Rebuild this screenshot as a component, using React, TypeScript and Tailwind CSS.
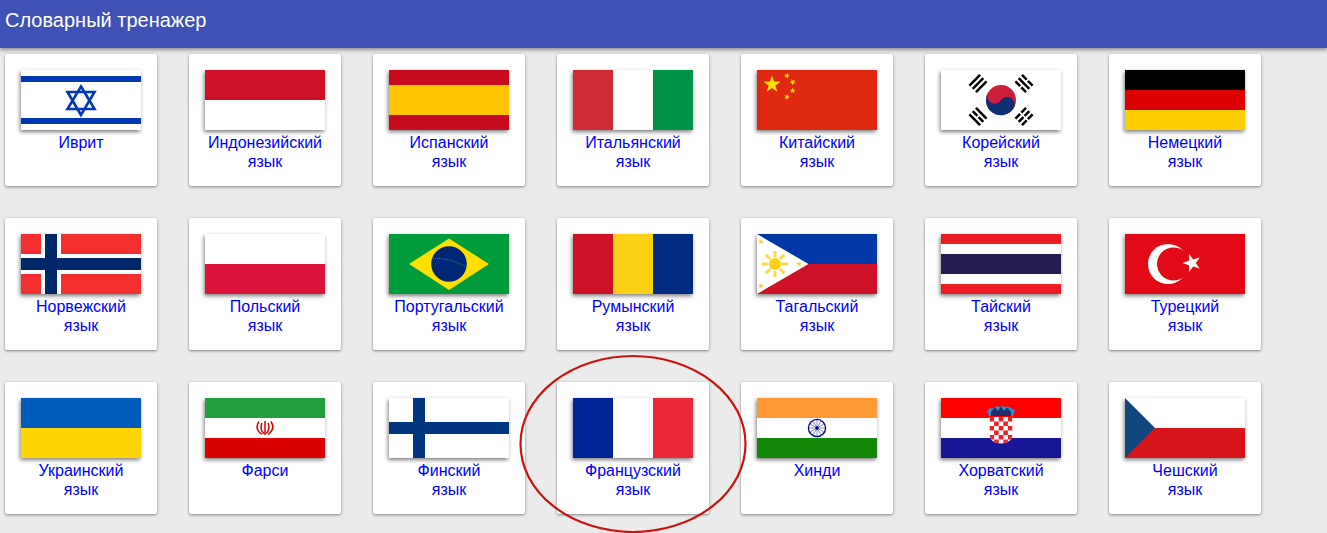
import React from 'react';

const star = (cx: number, cy: number, r: number, rot = 0) => {
  const pts: string[] = [];
  for (let i = 0; i < 10; i++) {
    const rad = i % 2 === 0 ? r : r * 0.4;
    const a = ((-90 + rot + i * 36) * Math.PI) / 180;
    pts.push(`${(cx + rad * Math.cos(a)).toFixed(2)},${(cy + rad * Math.sin(a)).toFixed(2)}`);
  }
  return pts.join(' ');
};

const Hbands = ({ colors }: { colors: string[] }) => (
  <>
    {colors.map((c, i) => (
      <rect key={i} x="0" y={(i * 60) / colors.length} width="120" height={60 / colors.length} fill={c} />
    ))}
  </>
);

const Vbands = ({ colors }: { colors: string[] }) => (
  <>
    {colors.map((c, i) => (
      <rect key={i} x={i * 40} y="0" width="40" height="60" fill={c} />
    ))}
  </>
);

// broken: which of the three bars have a gap in the middle
const Trigram = ({ x, y, rot, broken }: { x: number; y: number; rot: number; broken: boolean[] }) => (
  <g transform={`translate(${x} ${y}) rotate(${rot})`} stroke="#000" strokeWidth="2.5">
    {broken.map((b, i) => (
      <path key={i} d={`M${(i - 1) * 4.6} -7.5V7.5`} strokeDasharray={b ? '6.7 1.6' : undefined} />
    ))}
  </g>
);

const checks: { x: number; y: number }[] = [];
for (let row = 0; row < 6; row++) {
  for (let col = 0; col < 5; col++) {
    if ((row + col) % 2 === 0) checks.push({ x: 48.5 + col * 4.6, y: 19 + row * 4.5 });
  }
}

const flags: Record<string, React.ReactNode> = {
  il: (
    <>
      <rect width="120" height="60" fill="#fff" />
      <rect y="6" width="120" height="6" fill="#0038b8" />
      <rect y="48" width="120" height="6" fill="#0038b8" />
      <g fill="none" stroke="#0038b8" strokeWidth="2.6">
        <path d="M60 16.5L73.5 39H46.5Z" />
        <path d="M60 45L46.5 22H73.5Z" />
      </g>
    </>
  ),
  id: <Hbands colors={['#ce1126', '#ffffff']} />,
  es: (
    <>
      <rect width="120" height="60" fill="#c60b1e" />
      <rect y="15" width="120" height="30" fill="#ffc400" />
    </>
  ),
  it: <Vbands colors={['#ce2b37', '#ffffff', '#009246']} />,
  cn: (
    <>
      <rect width="120" height="60" fill="#de2910" />
      <polygon points={star(15, 14.5, 9)} fill="#ffde00" />
      <polygon points={star(30, 5.7, 3.2, 20)} fill="#ffde00" />
      <polygon points={star(35.7, 12, 3.2, 45)} fill="#ffde00" />
      <polygon points={star(35.7, 20.7, 3.2, 0)} fill="#ffde00" />
      <polygon points={star(30, 27, 3.2, 20)} fill="#ffde00" />
    </>
  ),
  kr: (
    <>
      <rect width="120" height="60" fill="#fff" />
      <circle cx="60" cy="30" r="15" fill="#cd1f3a" />
      <path d="M47.5 22a15 15 0 0 0 25 16.6a7.5 7.5 0 0 0 -12.5 -8.3a7.5 7.5 0 0 1 -12.5 -8.3Z" fill="#0f2f72" />
      <Trigram x={37} y={13.5} rot={45} broken={[false, false, false]} />
      <Trigram x={83} y={13.5} rot={-45} broken={[true, false, true]} />
      <Trigram x={37} y={46.5} rot={-45} broken={[false, true, false]} />
      <Trigram x={83} y={46.5} rot={45} broken={[true, true, true]} />
    </>
  ),
  de: <Hbands colors={['#000000', '#dd0000', '#ffce00']} />,
  no: (
    <>
      <rect width="120" height="60" fill="#f42f2f" />
      <rect x="20" width="20" height="60" fill="#fff" />
      <rect y="20" width="120" height="20" fill="#fff" />
      <rect x="24" width="12" height="60" fill="#002868" />
      <rect y="24" width="120" height="12" fill="#002868" />
    </>
  ),
  pl: <Hbands colors={['#ffffff', '#dc143c']} />,
  br: (
    <>
      <rect width="120" height="60" fill="#009b3a" />
      <path d="M60 4.5L100 30L60 56L20 30Z" fill="#fedf00" />
      <circle cx="60" cy="30" r="17.8" fill="#002776" />
      <path d="M44 24.5Q60 23.5 77.5 33" fill="none" stroke="#3f9f6f" strokeWidth="1" strokeDasharray="1 1" />
    </>
  ),
  ro: <Vbands colors={['#ce1126', '#fcd116', '#002b7f']} />,
  ph: (
    <>
      <Hbands colors={['#0038a8', '#ce1126']} />
      <path d="M0 0L51.5 30L0 60Z" fill="#fff" />
      <path
        d="M18 17V43M5 30H31M8.8 20.8L27.2 39.2M8.8 39.2L27.2 20.8"
        stroke="#fcd116"
        strokeWidth="3"
        strokeOpacity="0.8"
        strokeDasharray="6 14"
      />
      <circle cx="18" cy="30" r="6" fill="#fcd116" />
      <polygon points={star(4, 7.7, 3.2)} fill="#fcd116" />
      <polygon points={star(42, 30, 3.2)} fill="#fcd116" />
      <polygon points={star(4, 52, 3.2)} fill="#fcd116" />
    </>
  ),
  th: <Hbands colors={['#ed1c24', '#ffffff', '#241d4f', '#241d4f', '#ffffff', '#ed1c24']} />,
  tr: (
    <>
      <rect width="120" height="60" fill="#e30a17" />
      <circle cx="43" cy="30" r="20" fill="#fff" />
      <circle cx="48.5" cy="30" r="16.5" fill="#e30a17" />
      <polygon points={star(67, 29, 9.5, -18)} fill="#fff" />
    </>
  ),
  ua: <Hbands colors={['#005bbb', '#ffd500']} />,
  ir: (
    <>
      <Hbands colors={['#239f40', '#ffffff', '#da0000']} />
      <g fill="none" stroke="#da0000" strokeWidth="1.5">
        <path d="M60 23V37" />
        <path d="M56.8 25Q54.5 32 59 35.5" />
        <path d="M63.2 25Q65.5 32 61 35.5" />
        <path d="M54 23.5Q49 31 57 36.5" />
        <path d="M66 23.5Q71 31 63 36.5" />
      </g>
    </>
  ),
  fi: (
    <>
      <rect width="120" height="60" fill="#fff" />
      <rect x="24" width="12" height="60" fill="#003580" />
      <rect y="24" width="120" height="12" fill="#003580" />
    </>
  ),
  fr: <Vbands colors={['#002395', '#ffffff', '#ed2939']} />,
  in: (
    <>
      <Hbands colors={['#ff9933', '#ffffff', '#138808']} />
      <circle cx="60" cy="30" r="8.6" fill="#fff" stroke="#000080" strokeWidth="1.3" />
      {Array.from({ length: 12 }, (_, i) => (
        <path
          key={i}
          d="M60 30V22"
          stroke="#000080"
          strokeWidth="0.7"
          strokeOpacity="0.6"
          transform={`rotate(${i * 30} 60 30)`}
        />
      ))}
      <circle cx="60" cy="30" r="1.7" fill="#000080" />
    </>
  ),
  hr: (
    <>
      <Hbands colors={['#ff0000', '#ffffff', '#171796']} />
      <path d="M46 13.5L48.5 10L53 10.5L55 8L59 9L61 8L65 9L67 8.5L71 10.5L74 12.5L72 18H48Z" fill="#2f8fc4" />
      <path d="M50 14L54 9.5L57 13L60 8.5L63 13L66 9.5L70 14V18H50Z" fill="#20306f" />
      <path d="M48.5 19H71.5V35Q71.5 45 60 45.5Q48.5 45 48.5 35Z" fill="#fff" />
      <clipPath id="hr-shield">
        <path d="M48.5 19H71.5V35Q71.5 45 60 45.5Q48.5 45 48.5 35Z" />
      </clipPath>
      <g clipPath="url(#hr-shield)" fill="#e8242a">
        {checks.map((c, i) => (
          <rect key={i} x={c.x} y={c.y} width="4.6" height="4.5" />
        ))}
      </g>
    </>
  ),
  cz: (
    <>
      <Hbands colors={['#ffffff', '#d7141a']} />
      <path d="M0 0L30 30L0 60Z" fill="#11457e" />
    </>
  ),
};

const languages: { code: string; name: string; suffix?: boolean }[] = [
  { code: 'il', name: 'Иврит' },
  { code: 'id', name: 'Индонезийский', suffix: true },
  { code: 'es', name: 'Испанский', suffix: true },
  { code: 'it', name: 'Итальянский', suffix: true },
  { code: 'cn', name: 'Китайский', suffix: true },
  { code: 'kr', name: 'Корейский', suffix: true },
  { code: 'de', name: 'Немецкий', suffix: true },
  { code: 'no', name: 'Норвежский', suffix: true },
  { code: 'pl', name: 'Польский', suffix: true },
  { code: 'br', name: 'Португальский', suffix: true },
  { code: 'ro', name: 'Румынский', suffix: true },
  { code: 'ph', name: 'Тагальский', suffix: true },
  { code: 'th', name: 'Тайский', suffix: true },
  { code: 'tr', name: 'Турецкий', suffix: true },
  { code: 'ua', name: 'Украинский', suffix: true },
  { code: 'ir', name: 'Фарси' },
  { code: 'fi', name: 'Финский', suffix: true },
  { code: 'fr', name: 'Французский', suffix: true },
  { code: 'in', name: 'Хинди' },
  { code: 'hr', name: 'Хорватский', suffix: true },
  { code: 'cz', name: 'Чешский', suffix: true },
];

export default function App() {
  return (
    <div className="relative h-[533px] overflow-hidden bg-[#ebebeb] font-['Liberation_Sans',sans-serif]">
      <header className="relative h-12 bg-[#3f51b5] pl-[5px] pt-2 text-xl leading-6 text-white shadow-[0_2px_4px_rgba(0,0,0,0.4)]">
        Словарный тренажер
      </header>
      <div className="grid grid-cols-[repeat(7,152px)] gap-8 pl-[5px] pt-[6px]">
        {languages.map((lang) => (
          <a
            key={lang.code}
            href="#"
            className="h-[132px] rounded-[2px] bg-white px-4 pt-4 text-center text-base leading-[19px] text-[#0000ff] shadow-[0_1px_3px_rgba(0,0,0,0.45)]"
          >
            <svg
              viewBox="0 0 120 60"
              className="mb-[3px] block h-[60px] w-[120px] shadow-[-1px_2px_4px_rgba(0,0,0,0.5)]"
            >
              {flags[lang.code]}
            </svg>
            {lang.name}
            {lang.suffix && <span className="block">язык</span>}
          </a>
        ))}
      </div>
      <svg viewBox="0 0 228 180" className="pointer-events-none absolute left-[519px] top-[354px] h-[180px] w-[228px]">
        <ellipse cx="114" cy="90" rx="112.5" ry="88" fill="none" stroke="#cc1111" strokeWidth="2.2" />
      </svg>
    </div>
  );
}
